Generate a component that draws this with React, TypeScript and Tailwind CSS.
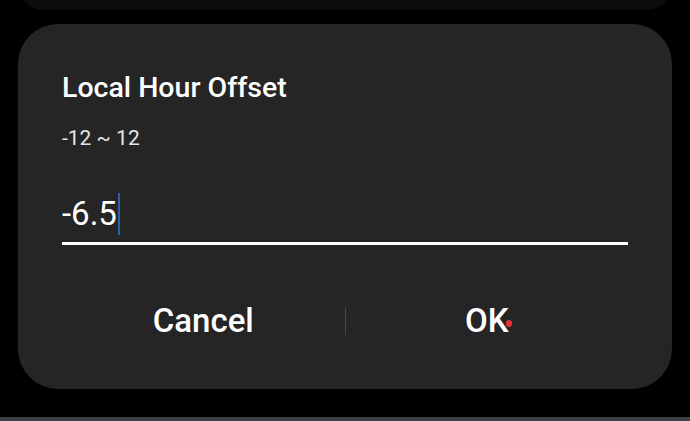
import React from "react";

export default function App() {
  return (
    <div
      className="w-[690px] h-[421px] bg-black overflow-hidden flex flex-col"
      style={{ fontFamily: "Roboto, 'Noto Sans', sans-serif" }}
    >
      <div className="mx-[18px] h-[50px] mt-[-40px] shrink-0 rounded-[40px] bg-[#0c0c0c]" />
      <div className="mx-[18px] mt-[14px] h-[365px] shrink-0 rounded-[40px] bg-[#252525] px-[44px] pt-[48px] flex flex-col">
        <div className="text-[28.5px] leading-[32px] font-medium text-white">Local Hour Offset</div>
        <div className="mt-[22px] text-[21px] leading-[24px] text-[#e6e6e6]">-12 ~ 12</div>
        <div className="mt-[44px] flex items-center h-[40px] text-[33px] leading-[40px] text-white">
          <span>-6.5</span>
          <span className="ml-[1px] w-[2px] h-[42px] my-[-1px] bg-[#2a62a8]" />
        </div>
        <div className="mt-[8px] h-[3px] bg-white" />
        <div className="mt-[56px] flex items-center h-[40px]">
          <div className="flex-1 text-center text-[33px] leading-[40px] font-medium text-white">Cancel</div>
          <div className="w-[1px] h-[27px] bg-[#4a4a4a]" />
          <div className="flex-1 flex justify-center text-[33px] leading-[40px] font-medium text-white">
            <span className="relative">
              OK
              <span className="absolute right-[-3px] top-[19px] w-[6px] h-[7px] rounded-full bg-[#e8323c]" />
            </span>
          </div>
        </div>
      </div>
      <div className="flex-1" />
      <div className="h-[4px] bg-[#3b4548]" />
    </div>
  );
}
